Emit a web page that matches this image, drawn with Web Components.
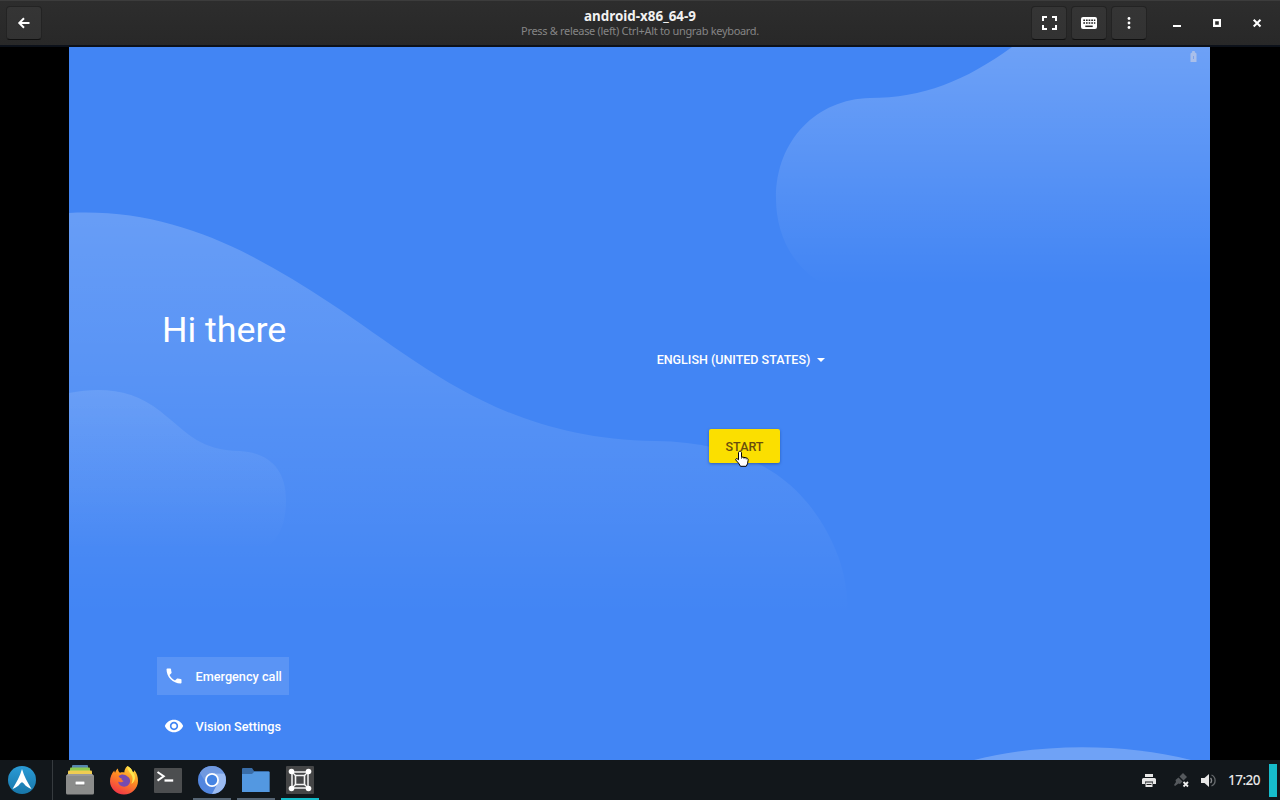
<!DOCTYPE html>
<html lang="en">
<head>
<meta charset="utf-8">
<title>android-x86_64-9</title>
<style>
    html, body {
        margin: 0;
        height: 100%;
        background: #000;
        overflow: hidden;
    }
</style>
</head>
<body>
<vm-desktop></vm-desktop>

<script>
const ICONS = {
    back: `<path d="M12.5 7H2.5M7 2.3 2.3 7 7 11.7" fill="none" stroke="#fff" stroke-width="2"/>`,
    fullscreen: `<path d="M1 5V1h4M10 1h4v4M14 9v4h-4M5 13H1V9" fill="none" stroke="#fff" stroke-width="2"/>`,
    keyboard: `<rect width="16" height="12" rx="2" fill="#fff"/>
        <path d="M2.300 3.200h12M2.300 6h12" stroke="#222" stroke-width="1.600" stroke-dasharray="1.700 .95"/><path d="M4.300 9.300h7.400" stroke="#222" stroke-width="1.500"/>`,
    menu: `<g fill="#fff"><circle cx="2" cy="2.500" r="1.400"/><circle cx="2" cy="7" r="1.400"/><circle cx="2" cy="11.500" r="1.400"/></g>`,
    minimize: `<path d="M0 9h8" stroke="#fff" stroke-width="2"/>`,
    maximize: `<path d="M1.100 1.100h5.800v5.800h-5.800z" fill="none" stroke="#fff" stroke-width="2.200"/>`,
    close: `<path d="m.7.700 6.800 6.800M7.500.7.700 7.500" stroke="#fff" stroke-width="2"/>`,
    phone: `<path fill="#fff" d="M6.62 10.79c1.44 2.83 3.76 5.14 6.59 6.59l2.2-2.2c.27-.27.67-.36 1.02-.24 1.12.37 2.33.57 3.57.57.55 0 1 .45 1 1V20c0 .55-.45 1-1 1-9.39 0-17-7.61-17-17 0-.55.45-1 1-1h3.5c.55 0 1 .45 1 1 0 1.25.2 2.45.57 3.57.11.35.03.74-.25 1.02l-2.2 2.2z"/>`,
    eye: `<path fill="#fff" d="M12 4.5C7 4.5 2.73 7.61 1 12c1.73 4.39 6 7.5 11 7.5s9.27-3.11 11-7.5c-1.73-4.39-6-7.5-11-7.5zM12 17c-2.76 0-5-2.24-5-5s2.24-5 5-5 5 2.24 5 5-2.24 5-5 5zm0-8c-1.66 0-3 1.34-3 3s1.34 3 3 3 3-1.34 3-3-1.34-3-3-3z"/>`,
    battery: `<path d="M2.200 1.200V0h2.600v1.200L6.500 2.500v8.500H.5V2.500z" fill="#a9bfea"/><path d="M3 5h1v3H3z" fill="#7fa3ea"/>`,
    pointer: `<path d="M5 1.2c1 0 1.5.7 1.5 1.6v4.1l5 1c1.2.3 1.8 1 1.6 2.4l-.6 3.5-1.3 2.5H5.5l-2-3.2L.8 10c-.5-.9.5-1.8 1.4-1.2l1.3 1V2.8c0-.9.6-1.600 1.500-1.600z" fill="#fff" stroke="#000" stroke-width="1"/>
        <path d="M6.500 7v1.800M9 7.500v1.600M11.200 8v1.500" stroke="#000" stroke-width=".6"/>`,
    arco: `<defs><linearGradient id="r" x2="0" y2="1"><stop stop-color="#2a9bd6"/><stop offset="1" stop-color="#1776a9"/></linearGradient></defs>
        <circle cx="14" cy="14" r="14" fill="url(#r)"/><path d="M14 3C12 10 8.500 16.500 4.500 23c3.300-1.200 5.800-3 7.500-5.300.7-1 1.300-1.500 2-1.500s1.300.5 2 1.500c1.700 2.300 4.200 4.100 7.500 5.300C19.500 16.500 16 10 14 3z" fill="#fff"/>`,
    files: `<rect x="6" width="16" height="5" rx="1" fill="#5686ad"/><rect x="4" y="2.500" width="20" height="5" rx="1" fill="#8fca4c"/>
        <rect x="2" y="5.500" width="24" height="5" rx="1" fill="#f0cd52"/><path d="M2 9h24l2 2v17a1.500 1.500 0 0 1-1.500 1.500h-25A1.500 1.500 0 0 1 0 28V11z" fill="#8b8c8b"/>
        <path d="M0 11 2 9h24l2 2z" fill="#999"/><path d="M9 16h10v4.500H9z" fill="#777"/><path d="M9.500 16.500h9v3h-9z" fill="#fff"/>`,
    firefox: `<defs><linearGradient id="f" x1=".8" y1="0" x2=".3" y2="1"><stop stop-color="#ffdf3e"/><stop offset=".45" stop-color="#ff8b22"/><stop offset="1" stop-color="#f03448"/></linearGradient></defs>
        <path d="M17.500 0c2.500 1.400 4.500 3.500 5.300 6.300 1-.1 1.600-1 1.400-2.200C27 7.500 28 11 28 15c0 7.600-6.200 13.500-14 13.500S0 22.500 0 15.300C0 11 1.700 7.500 4.300 4.500c0 1 .3 1.700.8 2.300C5.700 5 6.500 3.500 8 2.500c-.1 2 .7 3.200 2 4.200 1.500-.6 3-.6 4.300-.2C14.300 4 15.500 1.500 17.500 0z" fill="url(#f)"/>
        <path d="M8.500 10c3-2.500 6.500-1.800 8.600.2 2.300 1 3.200 3.200 2.900 5.600-.4 3-2.900 4.900-5.800 4.900-3.200 0-5.700-2-6-4.900 2 .8 4 .7 5.500-.8-2-.5-2.500-1.500-2.100-2.700-1.200.1-2.300-.8-3.100-2.300z" fill="#764bb0"/>
        <path d="M17.500 0c-.5 3.300 1.500 5.500 3.400 8 2.200 3 2.300 6.600.4 9.800 4-1.700 5.100-7.800 1.500-11.500C22 3.500 20 1.400 17.500 0z" fill="#ffe64f"/>`,
    terminal: `<rect width="28" height="25" rx="1" fill="#4c4e50"/><path d="m3.500 4 6.200 4.300-6.200 4.300" fill="none" stroke="#fff" stroke-width="2"/><path d="M10.500 12.500h8.700" stroke="#fff" stroke-width="2.300"/>`,
    chromium: `<circle cx="14" cy="14" r="14" fill="#5286df"/><path d="M14 7.500H26.400A14 14 0 0 0 1.900 7l6.500 10.300A6.500 6.500 0 0 1 14 7.500z" fill="#7099e0"/>
        <path d="M14 28A14 14 0 0 0 26.400 7.500H14a6.500 6.500 0 0 1 5.600 9.800z" fill="#9cbcf2"/><circle cx="14" cy="14" r="7" fill="#fff"/><circle cx="14" cy="14" r="5.200" fill="#4584e3"/>`,
    folder: `<path d="M1 0h9l2 3h14.500a1 1 0 0 1 1 1v20H0V1a1 1 0 0 1 1-1z" fill="#396da8"/><path d="M0 6h10l2-2h15.500v20H0z" fill="#5398e1"/>`,
    boxes: `<rect width="28" height="28" rx="1" fill="#454647"/><g fill="none" stroke="#f3f3f3"><path d="M6 6h16v16H6z" stroke-width="1.500"/><path d="m6 6 4 4M22 6l-4 4M6 22l4-4M22 22l-4-4" stroke-width="1.300"/><path d="M9.500 9.500h9v9h-9z" stroke-width="1.600"/></g>
        <g fill="#fff"><circle cx="5.500" cy="5.500" r="2.800"/><circle cx="22.500" cy="5.500" r="2.800"/><circle cx="5.500" cy="22.500" r="2.800"/><circle cx="22.500" cy="22.500" r="2.800"/></g>`,
    printer: `<path d="M3 0h8v3H3zM1.500 4h11A1.500 1.500 0 0 1 14 5.500V10h-3V7.500H3V10H0V5.500A1.500 1.500 0 0 1 1.500 4z" fill="#e6e6e6"/><path d="M3.500 8.500h7V13h-7z" fill="#e6e6e6"/><path d="M4.500 10.500h5" stroke="#222" stroke-width="1"/>`,
    network: `<g fill="#55595d"><path d="m9 0 4 4-3.500 3.500-4-4z"/><path d="m4.500 4.500 4 4L6 11l-1.500-.5L1 13l-1-1 2-3-.5-2z"/></g><path d="m9.500 9 4.500 4.500M14 9l-4.500 4.500" stroke="#eee" stroke-width="1.800"/>`,
    volume: `<path d="M0 4h3.500L8 0v13L3.500 9H0z" fill="#e6e6e6"/><path d="M9.500 4a3.500 3.500 0 0 1 0 5" fill="none" stroke="#85888a" stroke-width="1.400"/><path d="M10.500 1a6 6 0 0 1 0 11" fill="none" stroke="#666a6d" stroke-width="1.300"/>`
};

class VmIcon extends HTMLElement {
    constructor() {
        super();
        this.attachShadow({ mode: 'open' });
    }

    connectedCallback() {
        const w = this.getAttribute('w');
        const h = this.getAttribute('h') || w;
        const box = this.getAttribute('box') || `0 0 ${w} ${h}`;
        this.shadowRoot.innerHTML = `
        <style>
            :host { display: block; flex: none; }
            svg { display: block; overflow: visible; }
        </style>
        <svg width="${w}" height="${h}" viewBox="${box}">${ICONS[this.getAttribute('name')]}</svg>
        `;
    }
}

class VmButton extends HTMLElement {
    constructor() {
        super();
        this.attachShadow({ mode: 'open' });
        this.shadowRoot.innerHTML = `
        <style>
            :host {
                display: flex;
                align-items: center;
                justify-content: center;
                box-sizing: border-box;
                width: 36px;
                height: 34px;
                border: 1px solid #232323;
                border-bottom-color: #101010;
                border-radius: 4px;
                background: linear-gradient(#353535, #323232);
            }
            :host([flat]) {
                width: 40px;
                border: 0;
                background: none;
            }
        </style>
        <slot></slot>
        `;
    }
}

class VmHeader extends HTMLElement {
    constructor() {
        super();
        this.attachShadow({ mode: 'open' });
        this.shadowRoot.innerHTML = `
        <style>
            :host {
                display: grid;
                grid-template-columns: 1fr auto 1fr;
                box-sizing: border-box;
                height: 47px;
                padding: 0 3px 0 6px;
                align-items: center;
                background: linear-gradient(#2d2d2d, #282828);
                border-top: 1px solid #3c3c3c;
                border-bottom: 2px solid #0c111a;
                font-family: "Noto Sans", sans-serif;
                text-align: center;
            }
            .title {
                color: #f2f2f2;
                font-size: 13.400px;
                font-weight: bold;
                line-height: 15px;
            }
            .subtitle {
                color: #858585;
                font-size: 11px;
                letter-spacing: -.32px;
                line-height: 14px;
            }
            .text { padding-right: 3px; }
            .right { display: flex; justify-content: flex-end; gap: 4px; }
            .window { display: flex; margin-left: 6px; }
        </style>
        <vm-button><vm-icon name="back" w="14"></vm-icon></vm-button>
        <div class="text">
            <div class="title"><slot name="title"></slot></div>
            <div class="subtitle"><slot name="subtitle"></slot></div>
        </div>
        <div class="right">
            <vm-button><vm-icon name="fullscreen" w="15" h="14"></vm-icon></vm-button>
            <vm-button><vm-icon name="keyboard" w="16" h="12"></vm-icon></vm-button>
            <vm-button><vm-icon name="menu" w="4" h="14"></vm-icon></vm-button>
            <div class="window">
                <vm-button flat><vm-icon name="minimize" w="8" h="12"></vm-icon></vm-button>
                <vm-button flat><vm-icon name="maximize" w="8"></vm-icon></vm-button>
                <vm-button flat><vm-icon name="close" w="8"></vm-icon></vm-button>
            </div>
        </div>
        `;
    }
}

class SetupAction extends HTMLElement {
    constructor() {
        super();
        this.attachShadow({ mode: 'open' });
        this.shadowRoot.innerHTML = `
        <style>
            :host {
                display: flex;
                align-items: center;
                gap: 11.500px;
                box-sizing: border-box;
                width: 132px;
                height: 38px;
                padding-left: 7px;
                color: #fff;
                font: 500 12.700px Roboto, sans-serif;
                white-space: nowrap;
            }
            :host([active]) { background: rgba(255, 255, 255, .13); }
        </style>
        <vm-icon name="${this.getAttribute('icon')}" w="20" box="0 0 24 24"></vm-icon>
        <slot></slot>
        `;
    }
}

class SetupWizard extends HTMLElement {
    constructor() {
        super();
        this.attachShadow({ mode: 'open' });
        this.shadowRoot.innerHTML = `
        <style>
            :host {
                display: grid;
                grid-template-columns: 500px 351px 1fr;
                width: 1141px;
                height: 713px;
                position: relative;
                overflow: hidden;
                background: #4285f4;
                font-family: Roboto, sans-serif;
                color: #fff;
            }
            .clouds { position: absolute; inset: 0; }
            .intro, .form, .status { position: relative; display: flex; flex-direction: column; }
            .intro { padding-left: 88px; }
            h1 {
                margin: 261px 0 0 5px;
                font-size: 35.800px;
                font-weight: 400;
                line-height: 45px;
            }
            .actions {
                display: flex;
                flex-direction: column;
                gap: 12px;
                margin-top: auto;
                padding-bottom: 15px;
            }
            .form { align-items: center; }
            .language {
                display: flex;
                align-items: center;
                gap: 7px;
                margin-top: 304px;
                margin-left: -7px;
                font-size: 12.500px;
                font-weight: 500;
                line-height: 17px;
            }
            .caret {
                border: 4.500px solid transparent;
                border-top-color: #fff;
                border-bottom: 0;
            }
            .start {
                position: relative;
                width: 71px;
                height: 34px;
                margin-top: 61px;
                border-radius: 2px;
                background: #fbdf00;
                box-shadow: 0 1px 3px rgba(0, 30, 90, .4);
                color: #684d0d;
                font-size: 12.500px;
                font-weight: 500;
                line-height: 35px;
                text-align: center;
            }
            .pointer { position: absolute; left: 26px; top: 21px; }
            .status { align-items: flex-end; padding: 4px 13px 0 0; }
        </style>
        <svg class="clouds" width="1141" height="713" viewBox="69 47 1141 713">
            <defs>
                <linearGradient id="a" gradientUnits="userSpaceOnUse" x1="0" y1="213" x2="0" y2="615"><stop stop-color="#fff" stop-opacity=".2"/><stop offset="1" stop-color="#fff" stop-opacity="0"/></linearGradient>
                <linearGradient id="b" gradientUnits="userSpaceOnUse" x1="0" y1="390" x2="0" y2="550"><stop stop-color="#fff" stop-opacity=".11"/><stop offset="1" stop-color="#fff" stop-opacity="0"/></linearGradient>
                <linearGradient id="c" gradientUnits="userSpaceOnUse" x1="0" y1="47" x2="0" y2="285"><stop stop-color="#fff" stop-opacity=".23"/><stop offset="1" stop-color="#fff" stop-opacity="0"/></linearGradient>
            </defs>
            <path fill="url(#a)" d="M69 213C170 208 250 250 330 303C420 362 500 439 655 441C735 442 788 470 820 520C840 552 848 580 848 615H69z"/>
            <path fill="url(#b)" d="M69 393C105 386 135 391 160 411C190 435 200 450 240 451C270 453 286 470 286 500C286 530 275 545 255 555H69z"/>
            <path fill="url(#c)" d="M1012 47C965 81 923 98 870 98C817 99 776 140 776 198C776 240 797 274 835 290H1210V47z"/>
            <path fill="#fff" fill-opacity=".24" d="M974 760C1040 743 1125 743 1191 760z"/>
        </svg>
        <div class="intro">
            <h1>Hi there</h1>
            <div class="actions">
                <setup-action icon="phone" active>Emergency call</setup-action>
                <setup-action icon="eye">Vision Settings</setup-action>
            </div>
        </div>
        <div class="form">
            <div class="language">ENGLISH (UNITED STATES)<span class="caret"></span></div>
            <div class="start">START<vm-icon class="pointer" name="pointer" w="14" h="18"></vm-icon></div>
        </div>
        <div class="status"><vm-icon name="battery" w="7" h="11"></vm-icon></div>
        `;
    }
}

class TaskItem extends HTMLElement {
    constructor() {
        super();
        this.attachShadow({ mode: 'open' });
        this.shadowRoot.innerHTML = `
        <style>
            :host {
                display: flex;
                align-items: center;
                justify-content: center;
                box-sizing: border-box;
                width: 38px;
                height: 40px;
                border-bottom: 2px solid transparent;
                padding-top: 2px;
            }
            :host([open]) { border-color: #566574; }
            :host([active]) { border-color: #14bcc9; }
        </style>
        <slot></slot>
        `;
    }
}

class TaskBar extends HTMLElement {
    constructor() {
        super();
        this.attachShadow({ mode: 'open' });
        this.shadowRoot.innerHTML = `
        <style>
            :host {
                display: flex;
                justify-content: space-between;
                height: 40px;
                background: #12171b;
            }
            .apps, .tray { display: flex; align-items: center; }
            .apps { gap: 6px; padding-left: 3px; }
            .separator { width: 1px; height: 40px; margin: 0 2px 0 5px; background: #363b3f; }
            .time {
                width: 32px;
                margin-left: 13px;
                color: #e8e8e8;
                font: 500 13.500px/40px "Noto Sans", sans-serif;
                letter-spacing: -.5px;
                white-space: nowrap;
            }
            .edge { width: 8px; height: 33px; margin-left: 9px; margin-right: 3px; background: #16bdcc; }
        </style>
        <div class="apps">
            <task-item><vm-icon name="arco" w="28"></vm-icon></task-item>
            <div class="separator"></div>
            <task-item><vm-icon name="files" w="28" h="30"></vm-icon></task-item>
            <task-item><vm-icon name="firefox" w="28" h="29"></vm-icon></task-item>
            <task-item><vm-icon name="terminal" w="28" h="25"></vm-icon></task-item>
            <task-item open><vm-icon name="chromium" w="28"></vm-icon></task-item>
            <task-item open><vm-icon name="folder" w="28" h="24"></vm-icon></task-item>
            <task-item active><vm-icon name="boxes" w="28"></vm-icon></task-item>
        </div>
        <div class="tray">
            <vm-icon name="printer" w="14" h="13"></vm-icon>
            <vm-icon name="network" w="15" h="14" style="margin-left: 18px"></vm-icon>
            <vm-icon name="volume" w="14" h="13" style="margin-left: 12px"></vm-icon>
            <div class="time">17:20</div>
            <div class="edge"></div>
        </div>
        `;
    }
}

class VmDesktop extends HTMLElement {
    constructor() {
        super();
        this.attachShadow({ mode: 'open' });
        this.shadowRoot.innerHTML = `
        <style>
            :host {
                display: flex;
                flex-direction: column;
                width: 1280px;
                height: 800px;
                background: #000;
            }
            .screen { display: flex; padding-left: 69px; }
        </style>
        <vm-header>
            <span slot="title">android-x86_64-9</span>
            <span slot="subtitle">Press &amp; release (left) Ctrl+Alt to ungrab keyboard.</span>
        </vm-header>
        <div class="screen"><setup-wizard></setup-wizard></div>
        <task-bar></task-bar>
        `;
    }
}

customElements.define("vm-icon", VmIcon);
customElements.define("vm-button", VmButton);
customElements.define("vm-header", VmHeader);
customElements.define("setup-action", SetupAction);
customElements.define("setup-wizard", SetupWizard);
customElements.define("task-item", TaskItem);
customElements.define("task-bar", TaskBar);
customElements.define("vm-desktop", VmDesktop);
</script>
</body>
</html>
